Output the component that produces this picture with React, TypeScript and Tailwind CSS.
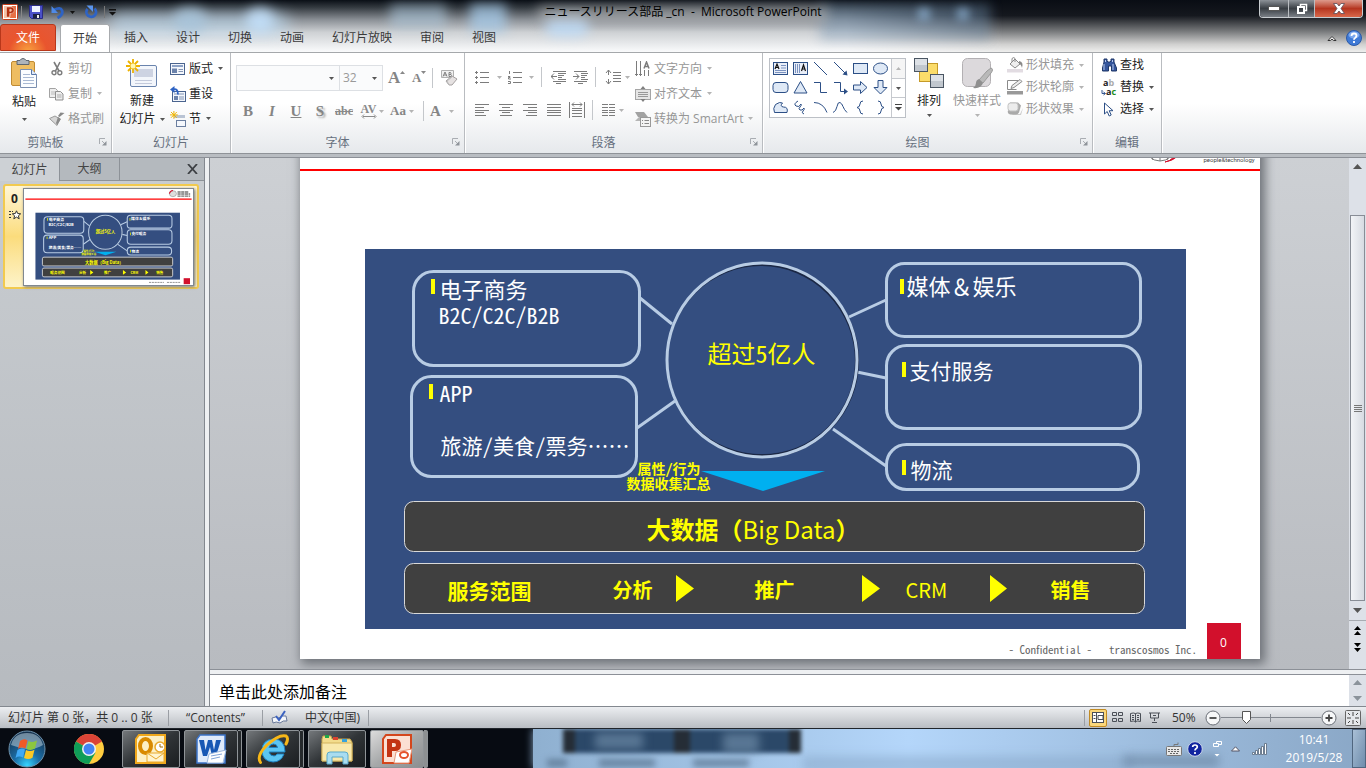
import React from 'react';

const UI = "font-['Open_Sans','Noto_Sans_CJK_SC',sans-serif]";
const SLIDE_FONT = "font-['Noto_Sans_CJK_SC',sans-serif]";

type Kids = { children?: React.ReactNode };

function Svg({ w, h, className = '', children }: Kids & { w: number; h: number; className?: string }) {
  return (
    <svg width={w} height={h} viewBox={`0 0 ${w} ${h}`} fill="none" aria-hidden="true" className={`shrink-0 ${className}`}>
      {children}
    </svg>
  );
}

function Caret({ dim = false, dark = false }: { dim?: boolean; dark?: boolean }) {
  return (
    <Svg w={5} h={3}>
      <path d="M0 0h5L2.500 3z" fill={dark ? '#111' : dim ? '#b4b4b4' : '#555'} />
    </Svg>
  );
}

function Sep({ className = 'h-5' }: { className?: string }) {
  return <span className={`w-px shrink-0 bg-[#c4c7cb] ${className}`} />;
}

/* ---------- window frame ---------- */

function TitleBar() {
  return (
    <div className="relative flex h-6 items-center">
      <div className="flex items-center pl-[2px]">
        <Svg w={16} h={16}>
          <rect x="0.5" y="0.5" width="15" height="15" rx="1" fill="#fff" stroke="#c8401c" />
          <rect x="2" y="2" width="12" height="12" fill="#f7c3a6" />
          <path d="M10 2h4v12h-6z" fill="#e87146" />
          <path fillRule="evenodd" d="M4.500 3H9q3.200 0 3.200 3.200T9 9.500H7.700V13H4.500zM7.700 5.200v2.200h.8q1.200 0 1.200-1.100T8.500 5.200z" fill="#b5300f" stroke="#fff" strokeWidth=".4" />
        </Svg>
        <span className="ml-[3px] h-3 w-px bg-[#888]" />
        <button aria-label="保存" className="ml-[7px]">
          <Svg w={14} h={14}>
            <path d="M.5.5h13v13h-11l-2-2z" fill="#4a50c8" stroke="#2a2c86" />
            <path d="M3 1h8v6H3z" fill="#eef3ff" />
            <path d="M4 9h7v4.500H4z" fill="#1c2244" />
            <path d="M8 10h2v3H8z" fill="#eee" />
          </Svg>
        </button>
        <button aria-label="撤消" className="ml-2 flex items-center gap-[5px]">
          <Svg w={14} h={14}>
            <path d="M3 5Q9.500 1.500 11 5.500T6.500 13" stroke="#2e63c4" strokeWidth="2.800" />
            <path d="M.500 1v7H7z" fill="#4f8ae6" />
          </Svg>
          <Caret dark />
        </button>
        <button aria-label="重复" className="ml-[9px]">
          <Svg w={14} h={14}>
            <path d="M10.500 3.500A4.800 4.800 0 1 1 3.500 4" stroke="#2e63c4" strokeWidth="2.800" />
            <path d="M2.500.500h6.500v6.500z" fill="#5b95ee" />
          </Svg>
        </button>
        <span className="ml-[6px] h-3 w-px bg-[#777]" />
        <button aria-label="自定义快速访问工具栏" className="ml-[4px]">
          <Svg w={7} h={7}>
            <path d="M0 0h7v1.500H0zM0 3h7L3.500 6.500z" fill="#111" />
          </Svg>
        </button>
      </div>
      <div className="absolute inset-x-0 top-[6px] mx-auto h-4 w-[290px] bg-[#b4b6b8]/60 blur-[6px]" aria-hidden="true" />
      <h1 className="absolute inset-x-0 top-1 mx-auto w-fit text-xs leading-4 text-black">
        ニュースリリース部品 _cn&nbsp; -&nbsp; Microsoft PowerPoint
      </h1>
      <div className="mr-[3px] ml-auto flex h-[18px] self-start overflow-hidden rounded-b-[4px] border border-t-0 border-[#c8ccd0]">
        <button aria-label="最小化" className="flex w-7 items-center justify-center bg-linear-to-b from-[#8d9298] via-[#3a3f45] to-[#7b8087]">
          <Svg w={12} h={5}><rect x=".5" y=".5" width="11" height="4" fill="#fff" stroke="#555" /></Svg>
        </button>
        <button aria-label="向下还原" className="flex w-[27px] items-center justify-center border-x border-[#b9bdc1] bg-linear-to-b from-[#8d9298] via-[#3a3f45] to-[#7b8087]">
          <Svg w={12} h={12}>
            <path d="M4.500 3V1.500h6v6H9" stroke="#fff" strokeWidth="1.500" />
            <rect x="2" y="4" width="6" height="6" stroke="#fff" strokeWidth="2" />
          </Svg>
        </button>
        <button aria-label="关闭" className="flex w-[47px] items-center justify-center bg-linear-to-b from-[#dd9a8c] via-[#b5351f] to-[#d9674a]">
          <Svg w={12} h={11}>
            <path d="M.5.5h3.500l2 2.500 2-2.500h3.500L8 5.500l3.500 5H8L6 8l-2 2.500H.5l3.500-5z" fill="#fff" stroke="#5a4a55" strokeWidth=".8" />
          </Svg>
        </button>
      </div>
    </div>
  );
}

function Tabs() {
  const tabs = ['插入', '设计', '切换', '动画', '幻灯片放映', '审阅', '视图'];
  return (
    <nav className="relative flex h-7 items-stretch text-xs text-[#3a3a3a]">
      <button className="mr-1 mb-px w-14 rounded-t-[3px] border border-[#b8371a] bg-radial-[at_50%_110%] from-[#f9a53f] via-[#e9552e] to-[#e2593a] text-white">文件</button>
      <button className="w-[50px] rounded-t-[3px] border border-b-0 border-[#a8abae] bg-white">开始</button>
      {tabs.map((t) => (
        <button key={t} className="px-[14px]">{t}</button>
      ))}
      <div className="mr-1 ml-auto flex items-center gap-[9px]">
        <button aria-label="功能区最小化">
          <Svg w={10} h={7}>
            <path d="M1 5.500L5 1.500l4 4H6.700L5 4 3.300 5.500z" fill="#fff" stroke="#333" />
          </Svg>
        </button>
        <button aria-label="帮助">
          <Svg w={16} h={16}>
            <circle cx="8" cy="8" r="7.500" fill="#3f7ad6" stroke="#2b5aa8" />
            <ellipse cx="8" cy="5" rx="5.500" ry="3.500" fill="#7ba8ee" />
            <path d="M5.500 6Q5.500 3.500 8 3.500t2.500 2.300Q10.500 7 9.300 7.700 8 8.400 8 9.800M8 11v2" stroke="#fff" strokeWidth="1.800" />
          </Svg>
        </button>
      </div>
    </nav>
  );
}

/* ---------- ribbon ---------- */

function Group({ label, width, launcher = false, children }: Kids & { label: string; width: string; launcher?: boolean }) {
  return (
    <section className={`relative flex shrink-0 flex-col border-r border-[#b9bcc0] shadow-[1px_0_0_#fff] ${width}`}>
      <div className="flex flex-1 items-start">{children}</div>
      <div className={`h-[18px] text-center text-xs leading-4 text-[#66707e] ${launcher ? 'pr-5' : ''}`}>{label}</div>
      {launcher && (
        <button aria-label={`${label}设置`} className="absolute right-1 bottom-[7px]">
          <Svg w={8} h={8}>
            <path d="M.5 6V.500H6M3 3l3 3" stroke="#a9adb2" />
            <path d="M7.500 3v4.500H3z" fill="#8e9399" />
          </Svg>
        </button>
      )}
    </section>
  );
}

function Item({ icon, text, caret = false, dim = false, h = 'h-[25px]' }: { icon: React.ReactNode; text: string; caret?: boolean; dim?: boolean; h?: string }) {
  return (
    <button className={`flex items-center whitespace-nowrap ${h} ${dim ? 'text-[#969696]' : 'text-[#222]'}`}>
      <span className="flex w-[19px] items-center">{icon}</span>
      <span>{text}</span>
      {caret && <span className="pl-[5px]"><Caret dim={dim} /></span>}
    </button>
  );
}

const gx = '#7c7c7c';

function ClipboardGroup() {
  return (
    <Group label="剪贴板" width="w-[112px]" launcher>
      <button className="flex w-12 shrink-0 flex-col items-center pt-[5px] text-xs leading-4 text-[#222]">
        <Svg w={28} h={32}>
          <rect x="1.500" y="3.500" width="23" height="24" rx="1.500" fill="#eebd62" stroke="#c08b33" />
          <path d="M7 2.500h3Q11 .500 13 .500t3 2h3v4H7z" fill="#aeb4bb" stroke="#5f6770" />
          <path d="M10.500 11.500h11l5 5v13h-16z" fill="#fbfdff" stroke="#7b8fb0" />
          <path d="M21.500 11.500v5h5" fill="#dfe9f7" stroke="#5977a8" />
          <path d="M13 16.500h7M13 19.500h11M13 22.500h11M13 25.500h11" stroke="#a9b9d3" />
        </Svg>
        <span className="mt-1">粘贴</span>
        <span className="mt-2"><Caret /></span>
      </button>
      <div className="ml-px flex flex-col pt-[3px] text-xs">
        <Item dim text="剪切" icon={
          <Svg w={14} h={15} className="ml-[2px]">
            <path d="M3 1l5 9M9 1L4.500 10" stroke={gx} strokeWidth="1.600" />
            <circle cx="3" cy="11.700" r="2" stroke={gx} strokeWidth="1.400" />
            <circle cx="8.800" cy="11.700" r="2" stroke={gx} strokeWidth="1.400" />
          </Svg>} />
        <Item dim caret text="复制" icon={
          <Svg w={15} h={14}>
            <path d="M.5 1.500h6l2 2v7h-8z" fill="#eee" stroke="#a3a3a3" />
            <path d="M2 5h4M2 7h4" stroke="#bbb" />
            <path d="M6.500 4.500h5l2.500 2.500v6H6.500z" fill="#eee" stroke="#8f8f8f" />
            <path d="M8 8h4.500M8 10h4.500" stroke="#aaa" />
          </Svg>} />
        <Item dim text="格式刷" icon={
          <Svg w={16} h={14}>
            <path d="M15.500 1l-5 4-1.500-1L11.500.500z" fill="#888" />
            <path d="M6 4l5 3-3 6.500L.5 6.500z" fill="#d6d6d6" stroke="#9a9a9a" />
            <path d="M9 5l3 2-4 6-1-2z" fill="#8a8a8a" />
          </Svg>} />
      </div>
    </Group>
  );
}

function Burst() {
  return <path d="M6 0v12M0 6h12M1.500 1.500l9 9M10.500 1.500l-9 9" stroke="#f0b400" strokeWidth="1.500" />;
}

function SlidesGroup() {
  return (
    <Group label="幻灯片" width="w-[119px]">
      <button className="ml-1 flex w-[52px] shrink-0 flex-col items-center pt-[6px] text-xs leading-[18px] text-[#222]">
        <Svg w={32} h={29}>
          <rect x="4.500" y="6.500" width="26" height="21" rx="1.500" fill="#f3f6fb" stroke="#6a84ad" />
          <rect x="8" y="10" width="19" height="8" fill="#cdd3e2" />
          <path d="M9 21.500h17M9 24.500h17" stroke="#c3cadb" />
          <path d="M7 0v14M0 7h14M2 2l10 10M12 2L2 12" stroke="#edb200" strokeWidth="1.800" />
          <circle cx="7" cy="7" r="2.500" fill="#fff6b0" />
        </Svg>
        <span className="mt-1">新建</span>
        <span className="flex items-center gap-1 whitespace-nowrap">幻灯片 <Caret /></span>
      </button>
      <div className="ml-[2px] flex flex-col pt-[3px] text-xs">
        <Item caret text="版式" icon={
          <Svg w={15} h={14}>
            <rect x=".5" y="1.500" width="14" height="11" fill="#f4f7fc" stroke="#4a648f" />
            <rect x="2" y="3" width="11" height="2" fill="#8da2c6" />
            <rect x="2" y="6.500" width="5" height="4.500" fill="#6b82ab" />
            <path d="M8.500 7.500H13M8.500 9.500H13" stroke="#8595b3" />
          </Svg>} />
        <Item text="重设" icon={
          <Svg w={16} h={16}>
            <rect x="2.500" y="5.500" width="13" height="10" fill="#f4f7fc" stroke="#4a648f" />
            <path d="M4 8h10M9 11h5M9 13h5" stroke="#7f92b5" />
            <rect x="4" y="10" width="4" height="4" fill="#6b82ab" />
            <path d="M3 3.500q5-1.500 5 5" stroke="#2e63c4" strokeWidth="1.800" />
            <path d="M0 3.500L4.500 0v7z" fill="#2e63c4" />
          </Svg>} />
        <Item caret text="节" icon={
          <Svg w={16} h={16}>
            <rect x="4" y="4" width="11" height="3" fill="#b9c3d4" />
            <rect x="6.500" y="9.500" width="9" height="6" fill="#f4f7fc" stroke="#6a7e9f" />
            <g transform="scale(.65)"><Burst /></g>
          </Svg>} />
      </div>
    </Group>
  );
}

function FontGroup() {
  const glyph = "font-['Liberation_Serif',serif] text-[15px] font-bold leading-5 text-[#858585]";
  return (
    <Group label="字体" width="w-[234px]" launcher>
      <div className="flex w-full flex-col pl-[5px]">
        <div className="mt-3 flex h-[26px] items-center">
          <label className="flex h-[26px] w-[104px] items-center border border-[#dde0e4] bg-[#fafbfc]">
            <input aria-label="字体名称" className="w-[92px] bg-transparent px-1 text-xs" />
            <Caret />
          </label>
          <label className="flex h-[26px] w-[43px] items-center border border-l-0 border-[#dde0e4] bg-[#fafbfc]">
            <input aria-label="字号" defaultValue="32" className="w-8 bg-transparent pl-[3px] text-xs text-[#999]" />
            <Caret />
          </label>
          <button aria-label="增大字号" className={`ml-[5px] flex w-6 items-center ${glyph}`}>
            <span className="text-[17px]">A</span><Svg w={5} h={3} className="mb-3"><path d="M0 3h5L2.500 0z" fill="#888" /></Svg>
          </button>
          <button aria-label="减小字号" className={`flex w-5 items-center ${glyph}`}>
            <span className="text-[13px]">A</span><Svg w={5} h={3} className="mb-3"><path d="M0 0h5L2.500 3z" fill="#888" /></Svg>
          </button>
          <Sep />
          <button aria-label="清除格式" className="ml-2">
            <Svg w={17} h={17}>
              <path d="M.5.500h12v7H.5z" fill="#f1f1f1" stroke="#b0b0b0" />
              <path d="M2 6.500L4 2l2 4.500M3 5h2.500M8 2.500v4h2q1-1 0-2h-2 1.500q1-1 0-2z" stroke="#808080" />
              <path d="M5 11l6-5 5 3-5 6H8z" fill="#e6e2e2" stroke="#a5a1a1" />
              <path d="M8 15l-2-4 5-4" stroke="#bbb" />
            </Svg>
          </button>
        </div>
        <div className="mt-2 flex h-6 items-center">
          <button aria-label="加粗" className={`w-6 ${glyph}`}>B</button>
          <button aria-label="倾斜" className={`w-6 italic ${glyph}`}>I</button>
          <button aria-label="下划线" className={`w-6 underline ${glyph}`}>U</button>
          <button aria-label="文字阴影" className={`w-6 [text-shadow:2px_2px_2px_#aaa] ${glyph}`}>S</button>
          <button aria-label="删除线" className="w-6 font-['Liberation_Serif',serif] text-xs font-bold text-[#8a8a8a] line-through">abc</button>
          <button aria-label="字符间距" className="flex w-8 items-center justify-center gap-[2px]">
            <span className="flex flex-col items-center font-['Liberation_Serif',serif] text-xs leading-[10px] font-bold text-[#8a8a8a]">
              AV
              <Svg w={16} h={5}><path d="M2 2.500h12M3 .500l-2 2 2 2M13 .500l2 2-2 2" stroke="#8a8a8a" /></Svg>
            </span>
            <Caret dim />
          </button>
          <button aria-label="更改大小写" className={`flex w-7 items-center justify-center gap-[3px] ${glyph}`}><span className="text-[13px]">Aa</span> <Caret dim /></button>
          <span className="w-[7px]" />
          <Sep />
          <button aria-label="字体颜色" className={`flex w-9 items-center justify-center gap-[8px] ${glyph}`}><span>A</span> <Caret dim /></button>
        </div>
      </div>
    </Group>
  );
}

function Lines({ d }: { d: string }) {
  return (
    <Svg w={16} h={13}>
      <path d={d} stroke={gx} />
    </Svg>
  );
}

function ParagraphGroup() {
  return (
    <Group label="段落" width="w-[298px]" launcher>
      <div className="flex w-[170px] flex-col pl-[10px]">
        <div className="mt-3 flex h-[24px] items-center">
          <button aria-label="项目符号" className="flex items-center gap-[6px]">
            <Lines d="M5 1.500h9M5 6.500h9M5 11.500h9M0 1.500h3M1.500 0v3M0 6.500h3M1.500 5v3M0 11.500h3M1.500 10v3" /><Caret dim />
          </button>
          <button aria-label="编号" className="ml-[6px] flex items-center gap-[5px]">
            <Lines d="M5 1.500h9M5 6.500h9M5 11.500h9M1.500 0v3M0 5.500h2v1H.5v1.500H3M0 10.500h2.500v2H0" /><Caret dim />
          </button>
          <span className="w-[7px]" /><Sep />
          <button aria-label="减少缩进量" className="ml-[9px]"><Lines d="M2 .500h13M7 2.500h8M7 4.500h6M7 6.500h4M7 8.500h8M2 10.500h13M5 12.500h5M0 5.500h6M3 2.500l-3 3 3 3M1.500 4.500v2" /></button>
          <button aria-label="增加缩进量" className="ml-[6px]"><Lines d="M1 .500h13M8 2.500h7M8 4.500h6M8 6.500h4M8 8.500h7M1 10.500h13M5 12.500h5M0 5.500h6M3 2.500l3 3-3 3M4.500 4.500v2" /></button>
          <span className="w-[6px]" /><Sep />
          <button aria-label="行距" className="ml-[9px] flex items-center gap-1">
            <Svg w={16} h={16}>
              <path d="M3.500 1v5M3.500 10v5M1 4l2.500-3L6 4M1 12l2.500 3L6 12M8 3.500h8M8 6.500h8M8 9.500h8M8 12.500h8" stroke={gx} />
            </Svg><Caret dim />
          </button>
        </div>
        <div className="mt-[9px] flex h-6 items-center">
          <button aria-label="左对齐"><Lines d="M0 .5h14M0 3.500h9M0 6.500h14M0 8.500h9M0 11.500h11" /></button>
          <button aria-label="居中" className="ml-2"><Lines d="M0 .5h14M3 3.500h8M0 6.500h14M3 8.500h8M1 11.500h12" /></button>
          <button aria-label="右对齐" className="ml-2"><Lines d="M0 .5h14M5 3.500h9M0 6.500h14M5 8.500h9M3 11.500h11" /></button>
          <button aria-label="两端对齐" className="ml-2"><Lines d="M0 .5h14M0 3.500h14M0 6.500h14M0 8.500h14M0 11.500h14" /></button>
          <button aria-label="分散对齐" className="ml-[6px]">
            <Svg w={16} h={16}>
              <path d="M.5 0v16M15.500 0v16M3 2.500h10M5 .500l-2 2 2 2M11 .500l2 2-2 2M3 6.500h10M3 8.500h10M3 11.500h10M3 14.500h10" stroke={gx} />
            </Svg>
          </button>
          <span className="w-[7px]" /><Sep />
          <button aria-label="分栏" className="ml-[9px] flex items-center gap-px">
            <Lines d="M0 .5h6M7 .5h6M0 3.500h6M7 3.500h6M0 6.500h6M7 6.500h6M0 8.500h6M7 8.500h6M0 11.500h6M7 11.500h6" /><Caret dim />
          </button>
        </div>
      </div>
      <div className="flex flex-col pt-[3px] text-xs">
        <Item dim caret text="文字方向" icon={
          <Svg w={16} h={16}>
            <path d="M1.500 0v15M5.500 0v15M9.500 9v6M13.500 9v6M0 13.500h3M4 13.500h3" stroke={gx} />
            <path d="M9 7.500L11.500 1l2.500 6.500M10 5.500h3" stroke={gx} strokeWidth="1.500" />
          </Svg>} />
        <Item dim caret text="对齐文本" icon={
          <Svg w={16} h={16}>
            <rect x=".5" y="3.500" width="15" height="10" fill="#e6e6e6" stroke="#a5a5a5" />
            <path d="M3 6.500h10M3 8.500h10M3 10.500h10" stroke="#999" />
            <path d="M8 0l2.500 3h-5zM8 16l2.500-3h-5z" fill="#808080" />
          </Svg>} />
        <Item dim caret text="转换为 SmartArt" icon={
          <Svg w={16} h={16}>
            <path d="M0 1h9l4 5H3z" fill="#a2a2a2" />
            <path d="M0 10l4-4h8v4z" fill="#b5b5b5" />
            <rect x="5.500" y="6.500" width="10" height="9" fill="#f4f4f4" stroke="#999" />
            <path d="M7 9.500h1M9.500 9.500H14M7 12.500h1M9.500 12.500H14" stroke="#888" />
          </Svg>} />
      </div>
    </Group>
  );
}

const ns = '#2c4f86';
const shapeGlyphs: React.ReactNode[] = [
  <><rect x="1.500" y="2.500" width="14" height="12" fill="#e9eef8" stroke={ns} /><path d="M3 9l2-5 2 5M3.800 7.500h2.500" stroke="#111" strokeWidth="1.200" /><path d="M9 5.500h5M9 8h5M3 10.500h11M3 12.500h11" stroke="#7b93c0" /></>,
  <><rect x="1.500" y="2.500" width="14" height="12" fill="#e9eef8" stroke={ns} /><path d="M3.500 4v9M5.500 4v9M7.500 4v9" stroke="#7b93c0" /><path d="M9.500 11l2-6 2 6M10.200 9h2.500" stroke="#111" strokeWidth="1.200" /></>,
  <path d="M2 2l13 13" stroke={ns} />,
  <><path d="M2 2l12 12" stroke={ns} /><path d="M15.500 15.500l-1-5-4 4z" fill={ns} /></>,
  <rect x="1.500" y="3.500" width="14" height="10" fill="#dfe9f6" stroke={ns} />,
  <ellipse cx="8.500" cy="8.500" rx="7" ry="5.500" fill="#dfe9f6" stroke={ns} />,
  <rect x="1" y="3.500" width="15" height="10" rx="3" fill="#dfe9f6" stroke={ns} />,
  <path d="M8.500 2.500l6.500 11.500H2z" fill="#dfe9f6" stroke={ns} />,
  <path d="M2 3.500h6.500v10H15" stroke={ns} />,
  <><path d="M2 3.500h6.500v9H13" stroke={ns} /><path d="M16 12.500l-4-3v6z" fill={ns} /></>,
  <path d="M1.500 6h7V2.500l6.500 6-6.500 6V11h-7z" fill="#dfe9f6" stroke={ns} />,
  <path d="M6 1.500h5v7h4l-6.500 6.500L2 8.500h4z" fill="#dfe9f6" stroke={ns} />,
  <path d="M2.500 13.500q-2-4 1-8l4-2 3 .5q-3 3.500 1 4 5 0 3.500 5.500z" fill="#dfe9f6" stroke={ns} />,
  <path d="M6 2Q1 5 4 7t5-2q1 1-1 3t0 3 4-2q1 1-1 3t1 3" stroke={ns} />,
  <path d="M2 3.500q9 0 13 10" stroke={ns} />,
  <path d="M1 13.500q3-1 4-6t3-4 3 4 4 6" stroke={ns} />,
  <path d="M11 2q-3 0-3 3t-3 3.500q3 .5 3 3.500t3 3" stroke={ns} />,
  <path d="M6 2q3 0 3 3t3 3.500q-3 .5-3 3.500t-3 3" stroke={ns} />,
];

function DrawingGroup() {
  return (
    <Group label="绘图" width="w-[330px]" launcher>
      <div className="mt-[5px] ml-[6px] flex h-[60px] w-[137px] shrink-0 border border-[#bcc0c6] bg-white">
        <div className="grid flex-1 grid-cols-6 grid-rows-3">
          {shapeGlyphs.map((g, i) => (
            <button key={i} aria-label={`形状 ${i + 1}`} className="flex items-center justify-center"><Svg w={17} h={17}>{g}</Svg></button>
          ))}
        </div>
        <div className="flex w-[14px] flex-col border-l border-[#c6c9ce]">
          <button aria-label="上一行" className="flex flex-1 items-center justify-center bg-[#f5f5f5]"><Svg w={5} h={3}><path d="M0 3h5L2.500 0z" fill="#b5b5b5" /></Svg></button>
          <button aria-label="下一行" className="flex flex-1 items-center justify-center border-y border-[#c6c9ce]"><Caret /></button>
          <button aria-label="其他" className="flex flex-1 items-center justify-center"><Svg w={7} h={7}><path d="M0 .5h7" stroke="#444" /><path d="M0 3h7L3.500 6.500z" fill="#444" /></Svg></button>
        </div>
      </div>
      <button className="flex w-[46px] shrink-0 flex-col items-center pt-[5px] text-xs leading-4 text-[#222]">
        <Svg w={30} h={31}>
          <rect x="5.500" y="5.500" width="18" height="18" fill="#fbdc6a" stroke="#c59a28" />
          <rect x=".5" y=".5" width="13" height="13" fill="#dde1e6" stroke="#4a5562" />
          <path d="M1 7h12v6H1z" fill="#c1c7ce" />
          <rect x="16.500" y="16.500" width="13" height="13" fill="#dde1e6" stroke="#4a5562" />
          <path d="M17 23h12v6H17z" fill="#c1c7ce" />
        </Svg>
        <span className="mt-1">排列</span>
        <span className="mt-[5px]"><Caret /></span>
      </button>
      <button className="flex w-[50px] shrink-0 flex-col items-center pt-[5px] text-xs leading-4 whitespace-nowrap text-[#969696]">
        <Svg w={31} h={31}>
          <rect x=".5" y=".5" width="28" height="28" rx="5" fill="#dcd9dc" stroke="#b3b0b3" />
          <path d="M29 10q3 1 0 5l-8 10-4-3 8-9z" fill="#b9b9b9" stroke="#9a9a9a" />
          <path d="M17 21l4 4q-2 6-10 5 3-2 3-5t3-4z" fill="#8f8f8f" />
        </Svg>
        <span className="mt-1">快速样式</span>
        <span className="mt-[5px]"><Caret dim /></span>
      </button>
      <div className="ml-[5px] flex flex-col pt-px text-xs">
        <Item h="h-[22px]" dim caret text="形状填充" icon={
          <Svg w={17} h={16}>
            <path d="M0 12h16v3.500H0z" fill="#e2dce2" />
            <path d="M3 7l5-5 5 5-5 4z" fill="#eee" stroke="#8a8a8a" />
            <path d="M5 5V1.500q2-2 3 0V5" stroke="#8a8a8a" />
            <path d="M12 4q5 1 3 7-1-4-3-4z" fill="#8a8a8a" />
          </Svg>} />
        <Item h="h-[22px]" dim caret text="形状轮廓" icon={
          <Svg w={17} h={16}>
            <path d="M0 12h16v3.500H0z" fill="#999" />
            <path d="M11 1.500H.5v9h9" stroke="#8a8a8a" />
            <path d="M4 9.500l1-3 8-6 2 2-8 6z" fill="#eee" stroke="#8a8a8a" />
          </Svg>} />
        <Item h="h-[22px]" dim caret text="形状效果" icon={
          <Svg w={17} h={14}>
            <path d="M4 12h9l3-6-2 7H6z" fill="#ccc" />
            <path d="M3 .500h8l3 3-2 7q-1 2-3 2H3q-3-1-2-4z" fill="#aaa" />
            <rect x="1" y="1" width="10" height="8" rx="2.500" fill="#ececec" stroke="#c2c2c2" />
          </Svg>} />
      </div>
    </Group>
  );
}

function EditGroup() {
  return (
    <Group label="编辑" width="w-[69px]">
      <div className="ml-2 flex flex-col pt-px text-xs">
        <Item h="h-[22px]" text="查找" icon={
          <Svg w={16} h={14}>
            <path d="M3 1h3v2l1 1h2l1-1V1h3v3l2.500 6v3h-5V8h-3v5h-6v-3L3 4z" fill="#35569c" stroke="#1e3768" />
            <path d="M3 6v6M12 6v6M4.500 2v2M11.500 2v2" stroke="#b6c8ee" />
          </Svg>} />
        <Item h="h-[22px]" caret text="替换" icon={
          <span className="flex flex-col text-[9px] leading-[9px] font-bold">
            <span>a<span className="text-[#aaa]">b</span></span>
            <span className="flex items-end"><Svg w={5} h={6}><path d="M1 0v3.500h3M2.500 2l2 1.500-2 1.500" stroke="#33548f" /></Svg>a<span className="text-[#1d8c1d]">c</span></span>
          </span>} />
        <Item h="h-[22px]" caret text="选择" icon={
          <Svg w={14} h={15} className="ml-[2px]">
            <path d="M1.500 1v11l2.700-2.500 2 4.500 2-1-2-4.300H10z" fill="#fff" stroke="#2c4f86" />
          </Svg>} />
      </div>
    </Group>
  );
}

/* ---------- slide contents ---------- */

function DiagramShapes({ line = 3 }: { line?: number }) {
  const c = '#b8cce4';
  return (
    <>
      <rect width="821" height="380" fill="#344e80" />
      <g stroke={c} strokeWidth={line} fill="none">
        <rect x="48.500" y="22.500" width="226" height="94" rx="20" />
        <rect x="46.500" y="127.500" width="225" height="100" rx="20" />
        <rect x="521.500" y="14.500" width="254" height="73" rx="18" />
        <rect x="521.500" y="96.500" width="254" height="83" rx="20" />
        <rect x="521.500" y="195.500" width="252" height="45" rx="20" />
        <path d="M275 49l32 26M272 179l38-27M484 68l37-17M492 123l29 6M468 180l53 37" />
      </g>
      <ellipse cx="398" cy="112" rx="94" ry="95" stroke="#1b2845" strokeWidth="4" fill="none" />
      <ellipse cx="396" cy="111" rx="93" ry="94" fill="#344e80" />
      <ellipse cx="397" cy="111" rx="95" ry="97" stroke={c} strokeWidth={line} fill="none" />
      <path d="M336 222h124l-62 20z" fill="#00b0f0" />
      <g fill="#404040" stroke="#d9d9d9" strokeWidth={line > 3 ? 5 : 1}>
        <rect x="39.500" y="252.500" width="740" height="50" rx="9" />
        <rect x="39.500" y="314.500" width="740" height="50" rx="9" />
      </g>
      <path d="M311 326l18 13.500L311 353zM497 326l18 13.500L497 353zM625 326l17 13.500L625 353z" fill="#ff0" />
      <path d="M66 30h4v15h-4zM64 135h4v15h-4zM535 30h4v15h-4zM537 113h4v15h-4zM537 211h4v15h-4z" fill="#ff0" />
    </>
  );
}

const hwid = "[font-feature-settings:'hwid']";

const labels = [
  { t: '电子商务', x: 75, y: 47, s: 22, cls: 'left-[75px] top-[27px] text-[22px] leading-6 text-white' },
  { t: 'B2C/C2C/B2B', x: 74, y: 73, s: 22, cls: `left-[74px] top-[53px] text-[22px] leading-6 text-white ${hwid}` },
  { t: 'APP', x: 75, y: 151, s: 22, cls: `left-[75px] top-[131px] text-[22px] leading-6 text-white ${hwid}` },
  { t: '旅游/美食/票务……', x: 76, y: 205, s: 21, cls: `left-[76px] top-[184px] text-[21px] leading-6 text-white ${hwid}` },
  { t: '媒体＆娱乐', x: 543, y: 44, s: 22, cls: 'left-[542px] top-[24px] text-[22px] leading-6 text-white' },
  { t: '支付服务', x: 545, y: 129, s: 21, cls: 'left-[545px] top-[109px] text-[21px] leading-6 text-white' },
  { t: '物流', x: 546, y: 228, s: 21, cls: 'left-[546px] top-[208px] text-[21px] leading-6 text-white' },
  { t: '超过5亿人', x: 343, y: 113, s: 24, cls: `left-[343px] top-[92px] text-[24px] leading-6 text-[#ff0] ${hwid}` },
  { t: '属性/行为', x: 273, y: 225, s: 14, cls: `left-[273px] top-[212px] text-[14px] leading-[15px] font-bold text-[#ff0] ${hwid}` },
  { t: '数据收集汇总', x: 261, y: 240, s: 14, cls: 'left-[262px] top-[227px] text-[14px] leading-[15px] font-bold text-[#ff0]' },
  { t: '服务范围', x: 83, y: 349, s: 21, cls: 'left-[83px] top-[329px] text-[21px] leading-6 font-bold text-[#ff0]' },
  { t: '分析', x: 248, y: 349, s: 20, cls: 'left-[248px] top-[329px] text-[20px] leading-6 font-bold text-[#ff0]' },
  { t: '推广', x: 390, y: 349, s: 20, cls: 'left-[390px] top-[329px] text-[20px] leading-6 font-bold text-[#ff0]' },
  { t: 'CRM', x: 540, y: 349, s: 20, cls: 'left-[541px] top-[329px] text-[20px] leading-6 text-[#ff0]' },
  { t: '销售', x: 686, y: 349, s: 20, cls: 'left-[686px] top-[329px] text-[20px] leading-6 font-bold text-[#ff0]' },
];

function Slide() {
  return (
    <article className="relative h-[544px] w-[960px] shrink-0 bg-white shadow-[3px_3px_10px_2px_#6d7177]">
      <div className="absolute inset-x-0 top-[54px] h-[2px] bg-[#f00]" />
      <Svg w={36} h={32} className="absolute top-[16px] left-[843px]">
        <ellipse cx="17" cy="15" rx="15" ry="15" stroke="#777" />
        <path d="M17 1v29M7 5q-5 10 3 24M27 5q5 10-3 24M3 23q14 5 28 0" stroke="#777" />
        <path d="M22 31q10-2 11-12 5 9-11 12z" fill="#d2102c" stroke="#d2102c" />
      </Svg>
      <p className="absolute top-[39px] left-[904px] font-[Roboto,sans-serif] text-[6px] leading-3 whitespace-nowrap text-[#444]">people&amp;technology</p>
      <div className={`absolute top-[134px] left-[65px] h-[380px] w-[821px] ${SLIDE_FONT}`}>
        <svg viewBox="0 0 821 380" className="absolute inset-0 size-full" aria-hidden="true"><DiagramShapes /></svg>
        {labels.map((l) => (
          <p key={l.t} className={`absolute whitespace-nowrap ${l.cls}`}>{l.t}</p>
        ))}
        <p className="absolute top-[266px] left-[282px] text-[24px] leading-7 whitespace-nowrap text-[#ff0]">
          <b>大数据（</b>Big Data<b>）</b>
        </p>
      </div>
      <footer className={`absolute top-[526px] left-[709px] flex gap-[17px] text-[11px] leading-4 whitespace-nowrap text-[#666] ${SLIDE_FONT}`}>
        <span className={hwid}>－ Confidential －</span>
        <span className={hwid}>transcosmos Inc.</span>
      </footer>
      <div className="absolute right-[19px] bottom-0 flex h-9 w-[34px] items-center justify-center bg-[#d2102c] font-['Open_Sans',sans-serif] text-xs text-white"><span className="pt-1">0</span></div>
    </article>
  );
}

function Thumbnail() {
  return (
    <button aria-label="幻灯片 0" className="mx-[3px] mt-[3px] flex h-[105px] w-[196px] rounded-[3px] border-2 border-[#f2ca4e] bg-linear-to-b from-[#fff6d5] via-[#fbdc7c] to-[#fdf3c8]">
      <span className="flex w-[18px] flex-col items-center pt-[5px] pl-px">
        <span className="text-xs leading-4 font-bold text-[#222]">0</span>
        <Svg w={12} h={10} className="mt-[3px]">
          <path d="M0 1.500h4M0 4.500h2M0 7.500h3" stroke="#333" strokeDasharray="2 1" />
          <path d="M7.500.800l1.200 2.700 3 .3-2.300 2 .8 3-2.700-1.700L4.800 8.800l.8-3-2.300-2 3-.3z" stroke="#333" fill="#fff" />
        </Svg>
      </span>
      <svg viewBox="0 0 960 544" className="mt-[2px] h-[98px] w-[171px] border border-[#808890] bg-white shadow-[1px_1px_3px_#777]" fontFamily="Noto Sans CJK SC" aria-hidden="true">
        <path d="M8 57h944" stroke="#f00" strokeWidth="8" />
        <ellipse cx="846" cy="26" rx="20" ry="17" fill="#ddd" stroke="#888" strokeWidth="3" />
        <path d="M826 26q4-18 20-18" stroke="#d2102c" strokeWidth="6" fill="none" />
        <path d="M872 16h64M872 28h72M872 40h72" stroke="#777" strokeWidth="8" strokeDasharray="18 3" />
        <g transform="translate(65 134)">
          <DiagramShapes line={6} />
          {labels.map((l, i) => (
            <text key={l.t} x={l.x} y={l.y} fontSize={l.s} fontWeight="bold" fill={i < 7 ? '#fff' : '#ff0'}>{l.t}</text>
          ))}
          <text x="282" y="290" fontSize="24" fontWeight="bold" fill="#ff0">大数据（Big Data）</text>
        </g>
        <path d="M710 530h85M812 530h75" stroke="#888" strokeWidth="5" strokeDasharray="12 4" />
        <rect x="907" y="506" width="36" height="34" fill="#d2102c" />
      </svg>
    </button>
  );
}

function Workspace() {
  return (
    <main className="flex min-h-0 flex-1 border-t border-[#8c9097] bg-[#eef0f2]">
      <aside className="flex w-[205px] shrink-0 flex-col border-r border-[#83888f] bg-linear-to-b from-[#c9cdd1] to-[#b6babf]">
        <div className="flex h-[23px] shrink-0 text-xs text-[#444]">
          <button className="w-[60px] border-r border-[#8d9298] bg-[#cdd1d5]">幻灯片</button>
          <button className="w-[60px] border-r border-b border-[#8d9298] bg-[#b4b9be]">大纲</button>
          <div className="flex flex-1 items-center justify-end border-b border-[#8d9298] bg-[#b4b9be] pr-[6px]">
            <button aria-label="关闭窗格"><Svg w={11} h={10}><path d="M1 0l9 10M10 0L1 10" stroke="#3c3f43" strokeWidth="1.800" /></Svg></button>
          </div>
        </div>
        <Thumbnail />
      </aside>
      <div className="ml-1 flex min-w-0 flex-1 flex-col border-l border-[#83888f]">
        <div className="flex min-h-0 flex-1 border-b border-[#8c9097]">
          <div className="flex min-w-0 flex-1 flex-col items-center justify-end overflow-hidden bg-linear-to-b from-[#cdd0d4] to-[#b8bbc0] pb-[10px]">
            <Slide />
          </div>
          <div className="flex w-[17px] shrink-0 flex-col items-center bg-[#dde1e8]">
            <button aria-label="向上滚动" className="flex h-[17px] items-center"><Svg w={9} h={5}><path d="M0 5h9L4.500 0z" fill="#555" /></Svg></button>
            <div className="mt-10 flex w-[15px] flex-1 flex-col items-center justify-center gap-px border border-[#888d96] bg-linear-to-r from-[#f2f4f7] to-[#d7dbe2]">
              <span className="h-px w-2 bg-[#777]" /><span className="h-px w-2 bg-[#777]" /><span className="h-px w-2 bg-[#777]" /><span className="h-px w-2 bg-[#777]" />
            </div>
            <button aria-label="向下滚动" className="flex h-5 w-full items-center justify-center border-b border-[#a8acb2]"><Svg w={9} h={5}><path d="M0 0h9L4.500 5z" fill="#555" /></Svg></button>
            <button aria-label="上一张幻灯片" className="mt-1"><Svg w={7} h={11}><path d="M0 5h7L3.500 1zM0 10h7L3.500 6z" fill="#000" /></Svg></button>
            <button aria-label="下一张幻灯片" className="mt-[6px] mb-[16px]"><Svg w={7} h={11}><path d="M0 1h7L3.500 5zM0 6h7L3.500 10z" fill="#000" /></Svg></button>
          </div>
        </div>
        <div className="mt-1 flex h-8 shrink-0 border-t border-[#8c9097]">
          <label className="flex flex-1 bg-white">
            <textarea aria-label="备注" defaultValue="单击此处添加备注" rows={1} className={`w-full resize-none overflow-hidden bg-transparent pt-1 pl-[9px] text-base leading-6 text-black outline-none ${SLIDE_FONT}`} />
          </label>
          <div className="flex w-[17px] flex-col items-center justify-around bg-[#dde1e8]">
            <Svg w={9} h={5}><path d="M0 5h9L4.500 0z" fill="#8b939b" /></Svg>
            <Svg w={9} h={5}><path d="M0 0h9L4.500 5z" fill="#8b939b" /></Svg>
          </div>
        </div>
      </div>
    </main>
  );
}

function StatusBar() {
  const s = '#4a4f57';
  return (
    <div className="flex h-[22px] shrink-0 items-center border-t border-[#83888f] bg-linear-to-b from-[#eceef1] via-[#d3d6da] to-[#b9bdc3] text-xs whitespace-pre text-[#333]">
      <span className="w-[168px] shrink-0 pl-2">幻灯片 第 0 张，共 0 .. 0 张</span>
      <Sep className="h-4 !bg-[#9a9ea4]" />
      <span className="w-[93px] shrink-0 text-center">“Contents”</span>
      <Sep className="mr-2 h-4 !bg-[#9a9ea4]" />
      <button aria-label="拼写检查">
        <Svg w={18} h={16}>
          <path d="M1 8q4-2 7 0 3-3 7-2l1 5q-4-1-7 2-4-2-7 0z" fill="#f4f6fa" stroke="#68789a" />
          <path d="M5 6l3 4 6-9" stroke="#3b62c0" strokeWidth="2" />
        </Svg>
      </button>
      <span className="pl-4">中文(中国)</span>
      <Sep className="ml-2 h-4 !bg-[#9a9ea4]" />
      <Sep className="ml-auto h-4 !bg-[#9a9ea4]" />
      <button aria-label="普通视图" className="ml-1 flex h-[18px] w-[18px] items-center justify-center rounded-[2px] border border-[#c08a24] bg-[#fbd77a]">
        <Svg w={12} h={11}><rect x=".5" y=".5" width="11" height="10" fill="#fff" stroke={s} /><path d="M4.500 1v9M6 3.500h5v4H6zM1.500 3.500h2M1.500 6.500h2" stroke={s} /></Svg>
      </button>
      <button aria-label="幻灯片浏览" className="ml-[5px]"><Svg w={11} h={11}><path d="M.5.500h4v3h-4zM6.500.500h4v3h-4zM.5 6.500h4v3h-4zM6.500 6.500h4v3h-4z" stroke={s} /></Svg></button>
      <button aria-label="阅读视图" className="ml-[7px]"><Svg w={11} h={11}><path d="M.5 1.500q3-1 5 0 2-1 5 0v8q-3-1-5 0-2-1-5 0zM5.500 1.500v9M2 3.500h2M2 5.500h2M2 7.500h2M7 3.500h2M7 5.500h2M7 7.500h2" stroke={s} /></Svg></button>
      <button aria-label="幻灯片放映" className="ml-2"><Svg w={11} h={11}><path d="M0 1h11M1.500 1v5h8V1M5.500 6v3M3 10.500h5M4 3.500h3" stroke={s} /></Svg></button>
      <span className="ml-3 w-[33px]">50%</span>
      <button aria-label="缩小"><Svg w={16} h={16}><circle cx="8" cy="8" r="7" fill="#f6f7f8" stroke="#6a6f77" /><path d="M4.500 8h7" stroke="#444" strokeWidth="1.800" /></Svg></button>
      <label className="relative flex h-4 w-[100px] items-center">
        <span className="h-px w-full bg-[#82878e]" />
        <span className="absolute left-[49px] h-2 w-px bg-[#82878e]" />
        <input type="range" min={0} max={100} defaultValue={20} aria-label="显示比例" className="absolute inset-0 opacity-0" />
        <Svg w={9} h={13} className="absolute left-[21px]"><path d="M.5.500h8v8l-4 4-4-4z" fill="#fff" stroke="#555" /></Svg>
      </label>
      <button aria-label="放大"><Svg w={16} h={16}><circle cx="8" cy="8" r="7" fill="#f6f7f8" stroke="#6a6f77" /><path d="M4.500 8h7M8 4.500v7" stroke="#444" strokeWidth="1.800" /></Svg></button>
      <button aria-label="适应窗口" className="mr-[5px] ml-2"><Svg w={16} h={16}><rect x=".5" y=".5" width="15" height="15" rx="1" fill="#e6e8eb" stroke="#666" /><path d="M8 2v4M8 10v4M2 8h4M10 8h4M3 3l2 2M13 3l-2 2M3 13l2-2M13 13l-2-2" stroke="#444" /></Svg></button>
    </div>
  );
}

/* ---------- taskbar ---------- */

function TaskButton({ name, stack = false, active = false, children }: Kids & { name: string; stack?: boolean; active?: boolean }) {
  return (
    <button aria-label={name} className="flex w-[58px] items-stretch">
      <span className={`flex flex-1 items-center justify-center rounded-[2px] border border-[#8f9498] ${active ? 'bg-linear-to-br from-[#dcdcdc] via-[#a7a9aa] to-[#8b8e90]' : 'bg-linear-to-br from-[#74787b] via-[#303437] to-[#1b1e21]'}`}>{children}</span>
      {stack && <span className={`w-1 rounded-r-[2px] border-y border-r border-[#8f9498] ${active ? 'bg-[#8d9092]' : 'bg-[#25292c]'}`} />}
    </button>
  );
}

function Taskbar() {
  return (
    <div className="relative flex h-10 shrink-0 items-center overflow-hidden border-t border-[#20252b] bg-[#070b12]">
      <div className="absolute inset-y-0 right-0 left-[533px] bg-linear-to-r from-[#8fb0d0] via-[#b4d6fa] via-45% to-[#8aa7c6] shadow-[0_0_8px_#86a4c4]" aria-hidden="true">
        <div className="absolute top-0 left-[30px] flex h-6 w-[238px] gap-4 border-x-[12px] border-[#252d36] bg-[#252d36] blur-[2px]">
          <span className="flex-1 bg-[#2b4868]" /><span className="flex-1 bg-[#2b4868]" />
        </div>
        <div className="absolute top-1 left-[62px] h-4 w-12 bg-[#7896b2]/60 blur-[5px]" />
        <div className="absolute top-1 left-[190px] h-5 w-9 bg-[#7896b2]/60 blur-[5px]" />
        <div className="absolute top-[30px] left-[14px] h-2 w-5 bg-[#56708c]/70 blur-[3px]" />
        <div className="absolute top-[30px] left-[66px] h-2 w-14 bg-[#56708c]/70 blur-[3px]" />
        <div className="absolute top-[30px] left-[160px] h-2 w-14 bg-[#56708c]/70 blur-[3px]" />
        <div className="absolute top-[27px] left-[270px] h-4 w-[330px] bg-[#86a5c5]/50 blur-[5px]" />
        <div className="absolute top-[26px] left-[590px] h-3 w-24 bg-[#5b7591]/50 blur-[5px]" />
      </div>
      <button aria-label="开始" className="ml-[8px]">
        <Svg w={38} h={38}>
          <defs>
            <radialGradient id="orb" cx=".5" cy=".95" r=".9"><stop offset="0" stopColor="#37d5ff" /><stop offset=".4" stopColor="#1b6fa8" /><stop offset="1" stopColor="#16324e" /></radialGradient>
          </defs>
          <circle cx="19" cy="19" r="18" fill="url(#orb)" stroke="#6f93ad" />
          <path d="M3 15Q6 3 19 3t16 12q-8 5-16 4T3 15z" fill="#b9cfdd" opacity=".55" />
          <path d="M12 11q4-3 7.500-.5l-2 8q-4-2-7.500.500z" fill="#ef5a28" />
          <path d="M20.500 11q4 2 8.500-.5l-2 8q-4 2.500-8.500.500z" fill="#8cc63f" />
          <path d="M9.500 20q4-2.500 7.500-.5l-2 8q-4-2-7.500.5z" fill="#3fa9f5" />
          <path d="M18 20q4 2 8.500-.3l-2 8q-4 2.300-8.500.300z" fill="#fbc926" />
        </Svg>
      </button>
      <button aria-label="Chrome" className="ml-7">
        <Svg w={30} h={30}>
          <circle cx="15" cy="15" r="15" fill="#ffcd40" />
          <path d="M15 15L2 7.500a15 15 0 0 1 26 0z" fill="#db4437" />
          <path d="M15 15L2 7.500A15 15 0 0 0 15 30l6.500-11.200z" fill="#0f9d58" />
          <circle cx="15" cy="15" r="7" fill="#f1f1f1" /><circle cx="15" cy="15" r="5.500" fill="#4285f4" />
        </Svg>
      </button>
      <div className="ml-[18px] flex h-[38px] gap-1">
        <TaskButton name="Outlook">
          <Svg w={32} h={30}>
            <path d="M4 1h26v28H1V5z" fill="#fdf0c4" stroke="#f0a81c" strokeWidth="2" />
            <ellipse cx="10.500" cy="12" rx="5.500" ry="7" stroke="#d98a00" strokeWidth="4" />
            <path d="M12 19h17v9H12z" fill="#fff4cf" stroke="#e8a92c" /><path d="M12 19l9 6 8-6" stroke="#e8a92c" />
            <circle cx="25" cy="13" r="5" fill="#fff" stroke="#e8a92c" strokeWidth="1.500" /><path d="M25 10v3h3" stroke="#a06a00" />
          </Svg>
        </TaskButton>
        <TaskButton name="Word" stack>
          <Svg w={31} h={30}>
            <path d="M4 1h25v28H1V5z" fill="#dfeafa" stroke="#3b73c8" strokeWidth="1.500" />
            <path d="M3 6h5l1.500 10L12 6h4l2 10 2-10h5l-5 16h-4l-2-9-3 9H7z" fill="#1757b4" />
            <path d="M13 20l17-4-3 13H11z" fill="#fff" stroke="#9db8dd" /><path d="M15 22l11-2M15 25l9-2" stroke="#7fa3d8" />
          </Svg>
        </TaskButton>
        <TaskButton name="Internet Explorer" stack>
          <Svg w={34} h={32}>
            <path fillRule="evenodd" d="M28 21q-3 8-11 8Q6 28 6 17.500T17 6q12 0 12 13H13q1 4 5 4 2 0 3-2zM13 14.500h8.500q-.500-3.500-4-3.500t-4.500 3.500z" fill="#5cc5f2" stroke="#1d83c4" />
            <path d="M4.500 29.500Q0 23 11 12 23 1 30 3q3 2 0 8" stroke="#f7b718" strokeWidth="3" strokeLinecap="round" />
          </Svg>
        </TaskButton>
        <TaskButton name="资源管理器">
          <Svg w={34} h={32}>
            <path d="M2 6l1-3h8l1 3h18l2 3v19H2z" fill="#f3dc8c" stroke="#c9a74c" />
            <path d="M5 2h4v3H5z" fill="#1fa84a" /><path d="M13 4h5v3h-5z" fill="#d9432f" /><path d="M22 6h5v3h-5z" fill="#36a3dd" />
            <path d="M2 10h30v18H2z" fill="#f9e9ac" stroke="#d3b45e" />
            <path d="M7 31v-9q0-3 3-3h15q3 0 3 3v9h-5v-7H12v7z" fill="#a9dcf0" stroke="#58a9cb" />
          </Svg>
        </TaskButton>
        <TaskButton name="PowerPoint" stack active>
          <Svg w={31} h={30}>
            <path d="M4 1h25v28H1V5z" fill="#fbe0d3" stroke="#d4461c" strokeWidth="2" />
            <path fillRule="evenodd" d="M5 5h8q6 0 6 6t-6 6h-3v6H5zM10 9v4h2q2 0 2-2t-2-2z" fill="#c33413" />
            <path d="M14 18l16-3-3 14H12z" fill="#fff" stroke="#e79a7c" /><ellipse cx="22" cy="21" rx="4" ry="3" stroke="#e5532c" strokeWidth="2" />
          </Svg>
        </TaskButton>
      </div>
      <div className="relative ml-auto flex h-full items-center text-white">
        <Svg w={16} h={14}><path d="M8 4V2.500h4V.5" stroke="#777" /><rect x=".5" y="4.500" width="15" height="9" rx="1" fill="#e8e8e8" stroke="#777" /><path d="M2 7.500h12M2 9.500h12M4 11.500h8" stroke="#666" strokeDasharray="2 1" /></Svg>
        <Svg w={16} h={16} className="ml-[5px]"><circle cx="8" cy="8" r="7.300" fill="#1024a0" stroke="#cdd8e8" /><path d="M5.700 6Q5.700 4 8 4t2.300 2Q10.300 7 9 7.700 8 8.300 8 9.500M8 11v2" stroke="#fff" strokeWidth="1.700" /></Svg>
        <Svg w={9} h={16} className="ml-[10px]"><path d="M3.500 2.500V.5h5v3H6M.5 2.500h5v3h-5z" stroke="#fff" /><path d="M1.500 13h5L4 15.500z" fill="#fff" /></Svg>
        <Svg w={9} h={6} className="ml-[9px]"><path d="M.5 5L4.500.800 8.500 5z" fill="#fff" stroke="#556" /></Svg>
        <Svg w={16} h={12} className="ml-3"><path d="M.5 9.500h2v2h-2zM3.500 7.500h2v4h-2zM6.500 5.500h2v6h-2zM9.500 3.500h2v8h-2zM12.500.500h2v11h-2z" fill="#fff" stroke="#57677a" strokeWidth=".8" /></Svg>
        <time className="ml-4 flex w-[60px] flex-col items-center text-xs leading-[18px]"><span>10:41</span><span>2019/5/28</span></time>
        <button aria-label="显示桌面" className="ml-2 h-full w-[14px] border border-[#50667f] bg-linear-to-br from-[#a9bfd6] to-[#6f8dac]" />
      </div>
    </div>
  );
}

export default function App() {
  return (
    <div className={`flex h-screen min-h-[480px] flex-col overflow-hidden bg-[#cfd2d6] ${UI}`}>
      <header className="relative shrink-0 overflow-hidden border-b border-[#a5a8ab] bg-[linear-gradient(to_bottom,#0a0f16_0%,#33393f_14%,#8b9096_38%,#ced1d4_62%,#fafbfc_100%)]">
        <div className="absolute inset-0" aria-hidden="true">
          <div className="absolute inset-y-0 right-0 w-[38%] bg-[linear-gradient(to_bottom,#090d14_0%,#15181e_30%,#77797b_60%,#d0d0cf_85%,#efefee_100%)] [mask-image:linear-gradient(to_right,transparent,#000_30%)]" />
          <div className="absolute top-3 left-[110px] h-6 w-[180px] rounded-full bg-[#bfe0f7]/50 blur-[7px]" />
          <div className="absolute top-2 left-[174px] h-6 w-8 rounded-full bg-[#a9c6dc]/80 blur-[6px]" />
          <div className="absolute top-2 left-[246px] h-6 w-7 rounded-full bg-[#c5e4ff]/80 blur-[6px]" />
          <div className="absolute top-1 left-[390px] h-6 w-14 bg-[#b5d3ea]/50 blur-[6px]" />
          <div className="absolute top-1 left-[470px] h-7 w-9 bg-[#a8cff0]/70 blur-[6px]" />
          <div className="absolute top-4 left-[545px] h-5 w-11 rounded-full bg-[#bfe0ff]/80 blur-[6px]" />
          <div className="absolute top-1 left-[820px] h-9 w-[170px] bg-[#6d8fae]/40 blur-[6px]" />
          <div className="absolute top-2 left-[918px] h-3 w-3 bg-[#9cc4ea]/60 blur-[4px]" />
          <div className="absolute top-2 left-[957px] h-3 w-3 bg-[#9cc4ea]/60 blur-[4px]" />
        </div>
        <TitleBar />
        <Tabs />
      </header>
      <div className="flex h-[101px] shrink-0 overflow-hidden border-b border-[#8f9398] bg-linear-to-b from-white via-white via-50% to-[#e6e9ec]">
        <ClipboardGroup />
        <SlidesGroup />
        <FontGroup />
        <ParagraphGroup />
        <DrawingGroup />
        <EditGroup />
      </div>
      <div className="h-[3px] shrink-0 bg-[#b9bdc2]" />
      <Workspace />
      <StatusBar />
      <Taskbar />
    </div>
  );
}
